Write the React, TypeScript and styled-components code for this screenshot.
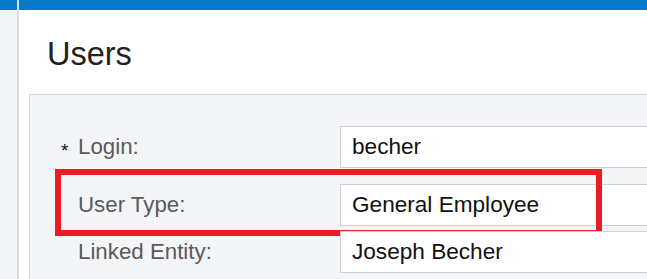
import React from 'react';
import styled, {createGlobalStyle} from 'styled-components';

const GlobalStyle = createGlobalStyle`
  html, body {
    margin: 0;
    padding: 0;
    background: #ffffff;
    overflow: hidden;
  }
  body {
    font-family: "Liberation Sans", Arial, sans-serif;
  }
`

type Field = {
    label: string
    value: string
    required?: boolean
    spaceAbove: number
    highlighted?: boolean
}

const fields: Field[] = [
    {label: 'Login:', value: 'becher', required: true, spaceAbove: 0},
    {label: 'User Type:', value: 'General Employee', spaceAbove: 16, highlighted: true},
    {label: 'Linked Entity:', value: 'Joseph Becher', spaceAbove: 5},
]

export default function App() {
    return (
        <Page>
            <GlobalStyle/>
            <Sidebar/>
            <Main>
                <Title>Users</Title>
                <Panel>
                    {fields.map(field => (
                        <Row key={field.label} $spaceAbove={field.spaceAbove}>
                            <Required>{field.required ? '*' : ''}</Required>
                            <Label>{field.label}</Label>
                            <Input readOnly value={field.value}/>
                            {field.highlighted && <Highlight/>}
                        </Row>
                    ))}
                </Panel>
            </Main>
        </Page>
    );
}

const Page = styled.div`
  display: flex;
  width: 647px;
  height: 279px;
  overflow: hidden;
`
const Sidebar = styled.div`
  flex: 0 0 17px;
  background: linear-gradient(#0779c9 0 10px, #f3f4f6 10px);
  border-right: 2px solid #dcdde0;
`
const Main = styled.div`
  flex: 1;
  min-width: 0;
  display: flex;
  flex-direction: column;
  background: linear-gradient(#0779c9 0 10px, #ffffff 10px);
  padding-top: 10px;
  overflow: hidden;
`
const Title = styled.h1`
  margin: 28px 0 24px 28px;
  font-size: 32.5px;
  line-height: 32px;
  font-weight: normal;
  color: #222222;
`
const Panel = styled.div`
  margin-left: 10px;
  width: 700px;
  flex: 1;
  padding: 31px 0 0 31px;
  background: #f4f5f7;
  border-top: 1px solid #d5d6db;
  border-left: 1px solid #d5d6db;
`
const Row = styled.div<{ $spaceAbove: number }>`
  position: relative;
  display: grid;
  grid-template-columns: 17px 262px 360px;
  align-items: center;
  height: 42px;
  margin-top: ${p => p.$spaceAbove}px;
`
const Required = styled.span`
  font-size: 19px;
  color: #111111;
  padding-top: 7px;
`
const Label = styled.span`
  font-size: 22.3px;
  color: #5a5a5a;
`
const Input = styled.input`
  box-sizing: border-box;
  height: 42px;
  width: 100%;
  margin: 0;
  padding: 0 0 0 11px;
  border: 1px solid #d0d1d4;
  background: #ffffff;
  font-family: "Liberation Sans", Arial, sans-serif;
  font-size: 22.6px;
  color: #111111;
  outline: none;
`
const Highlight = styled.div`
  position: absolute;
  left: -6px;
  top: -15px;
  width: 547px;
  height: 67px;
  box-sizing: border-box;
  border: 6px solid #ec1c24;
  pointer-events: none;
`
